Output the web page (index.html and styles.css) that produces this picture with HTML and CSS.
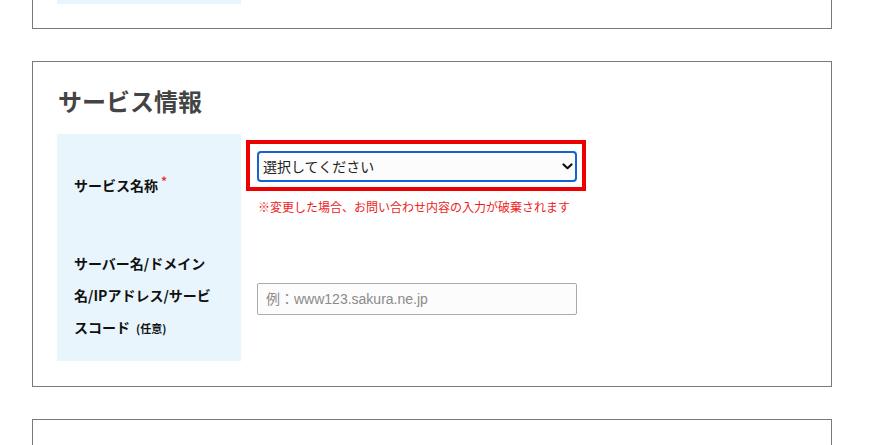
FILE: index.html
```html
<!DOCTYPE html>
<html lang="ja">
<head>
<meta charset="utf-8">
<title>サービス情報</title>
<link rel="stylesheet" href="styles.css">
</head>
<body>
<div class="page">
  <section class="box box-prev">
    <div class="prev-cell"></div>
  </section>

  <section class="box">
    <h2 class="title">サービス情報</h2>
    <div class="form-grid">
      <div class="label label-row1">
        <div class="label-text">サービス名称<sup class="req">*</sup></div>
      </div>
      <div class="value value-row1">
        <div class="select-wrap">
          <select class="select">
            <option>選択してください</option>
          </select>
          <svg class="chevron" width="11" height="7" viewBox="0 0 11 7"><path d="M1.5 1.5 L5.5 5.2 L9.5 1.5" fill="none" stroke="#111" stroke-width="2.2" stroke-linecap="round" stroke-linejoin="round"/></svg>
          <div class="highlight"></div>
        </div>
        <p class="note">※変更した場合、お問い合わせ内容の入力が破棄されます</p>
      </div>
      <div class="label label-row2">
        <div class="label-text">サーバー名/ドメイン名/IPアドレス/サービスコード<small class="opt">(任意)</small></div>
      </div>
      <div class="value value-row2">
        <input class="input" type="text" placeholder="例：www123.sakura.ne.jp">
      </div>
    </div>
  </section>

  <section class="box box-next"></section>
</div>
</body>
</html>
```

FILE: styles.css
```css
* { box-sizing: border-box; }

html, body {
  margin: 0;
  padding: 0;
  background: #ffffff;
  font-family: "Noto Sans CJK JP", "Noto Sans", "Liberation Sans", sans-serif;
  color: #222;
}

.page {
  padding-left: 32px;
  overflow: hidden;
  height: 445px;
}

.box {
  width: 800px;
  border: 1px solid #7a7a7a;
  background: #fff;
  padding: 23px 24px 25px;
  margin-top: 32px;
}

.box-prev {
  margin-top: 0;
  border-top: none;
  padding: 0 24px 24px;
}

.prev-cell {
  width: 184px;
  height: 4px;
  background: #e8f5fc;
}

.box-next {
  height: 60px;
}

.title {
  margin: 0 0 17px;
  height: 32px;
  line-height: 31px;
  font-size: 24px;
  font-weight: 700;
  color: #444;
  padding-left: 1px;
}

.form-grid {
  display: grid;
  grid-template-columns: 184px 1fr;
  grid-template-rows: 102px 125px;
}

.label {
  background: #e8f5fc;
  display: flex;
  align-items: center;
  padding: 0 17px;
  font-size: 14px;
  font-weight: 700;
  color: #111;
}

.req {
  color: #e8313a;
  font-size: 12px;
  margin-left: 3px;
  vertical-align: 5px;
  line-height: 0;
}

.label-row2 {
  line-height: 32px;
  padding-bottom: 6px;
}

.opt {
  display: inline-block;
  font-size: 11px;
  font-weight: 700;
  margin-left: 6px;
  line-height: 32px;
}

.value {
  padding-left: 16px;
}

.value-row1 {
  padding-top: 17px;
}

.select-wrap {
  position: relative;
  width: 320px;
  height: 31px;
}

.select {
  appearance: none;
  -webkit-appearance: none;
  width: 320px;
  height: 31px;
  border: 2px solid #1463d0;
  border-radius: 4px;
  background: #fcfcfc;
  padding: 0 24px 2px 4px;
  font-family: "Noto Sans CJK JP", sans-serif;
  font-size: 14px;
  color: #222;
  outline: none;
}

.chevron {
  position: absolute;
  right: 4px;
  top: 12px;
  pointer-events: none;
}

.highlight {
  position: absolute;
  left: -11px;
  top: -11px;
  right: -9px;
  bottom: -9px;
  border: 4px solid #ee0000;
  pointer-events: none;
}

.note {
  margin: 15px 0 0 1px;
  font-size: 12px;
  line-height: 20px;
  color: #ee1c1c;
}

.value-row2 {
  display: flex;
  align-items: center;
}

.input {
  width: 320px;
  height: 32px;
  border: 1px solid #aaaaaa;
  border-radius: 2px;
  background: #fcfcfc;
  padding: 0 8px;
  font-family: "Liberation Sans", "Noto Sans CJK JP", sans-serif;
  font-size: 14px;
  color: #222;
}

.input::placeholder {
  color: #8a8a8a;
}
```
